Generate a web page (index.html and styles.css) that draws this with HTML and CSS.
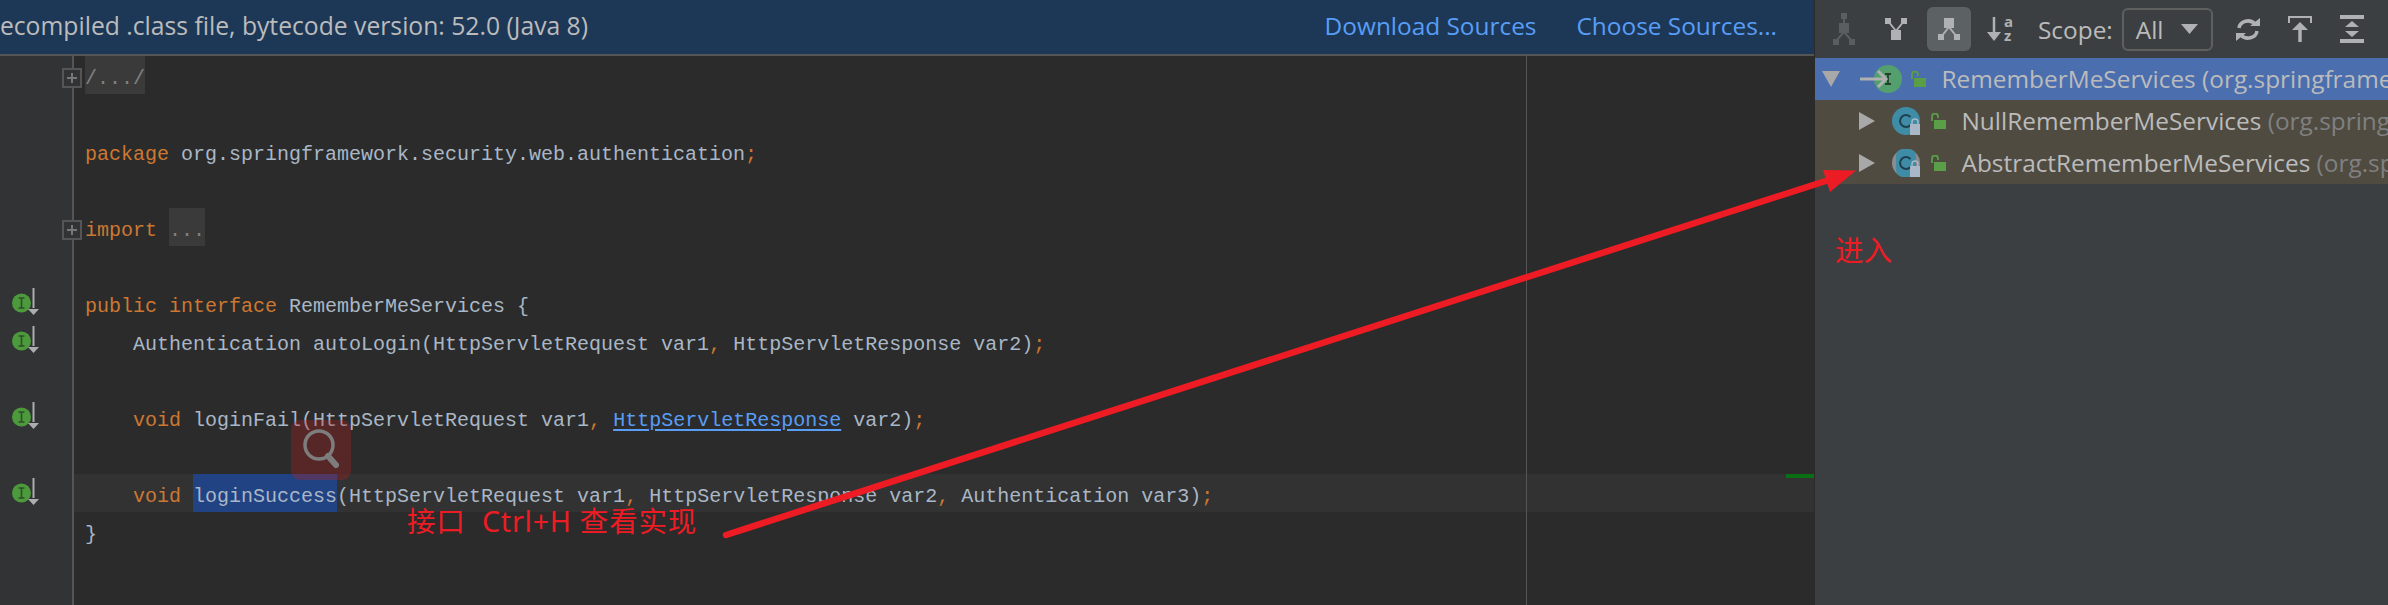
FILE: index.html
```html
<!DOCTYPE html>
<html lang="zh">
<head>
<meta charset="utf-8">
<title>RememberMeServices</title>
<link rel="stylesheet" href="styles.css">
</head>
<body>
<svg width="0" height="0" class="defs">
  <defs>
    <g id="impl">
      <circle cx="9.5" cy="15" r="9.5" fill="#4d9a3c"/>
      <path d="M6.5 10h6M6.5 20h6M9.5 10v10" stroke="#2f4f2a" stroke-width="1.6" fill="none"/>
      <path d="M21.5 0v20" stroke="#adadad" stroke-width="2" fill="none"/>
      <path d="M16 21h11l-5.500 6z" fill="#adadad"/>
    </g>
    <g id="lockg">
      <path d="M2 8V3.500a3 3 0 0 1 6 0V5" stroke="#5a9e48" stroke-width="1.800" fill="none"/>
      <rect x="4" y="7" width="12" height="9" fill="#5a9e48"/>
    </g>
    <g id="tri"><path d="M0 0l16 9-16 9z" fill="#a8a8a8"/></g>
  </defs>
</svg>
<div class="app">
  <main class="editor">
    <header class="banner">
      <span class="banner-text">Decompiled .class file, bytecode version: 52.0 (Java 8)</span>
      <a class="banner-link first">Download Sources</a>
      <a class="banner-link">Choose Sources...</a>
    </header>
    <div class="body">
      <div class="gutter">
        <div class="gline"><span class="foldbox"></span></div>
        <div class="gline"></div>
        <div class="gline"></div>
        <div class="gline"></div>
        <div class="gline"><span class="foldbox"></span></div>
        <div class="gline"></div>
        <div class="gline"><svg class="impl" width="28" height="28"><use href="#impl"/></svg></div>
        <div class="gline"><svg class="impl" width="28" height="28"><use href="#impl"/></svg></div>
        <div class="gline"></div>
        <div class="gline"><svg class="impl" width="28" height="28"><use href="#impl"/></svg></div>
        <div class="gline"></div>
        <div class="gline"><svg class="impl" width="28" height="28"><use href="#impl"/></svg></div>
      </div>
      <div class="code">
        <div class="line"><span class="fold">/.../</span></div>
        <div class="line"></div>
        <div class="line"><span class="kw">package</span> org.springframework.security.web.authentication<span class="kw">;</span></div>
        <div class="line"></div>
        <div class="line"><span class="kw">import</span> <span class="fold">...</span></div>
        <div class="line"></div>
        <div class="line"><span class="kw">public interface</span> RememberMeServices {</div>
        <div class="line">    Authentication autoLogin(HttpServletRequest var1<span class="kw">,</span> HttpServletResponse var2)<span class="kw">;</span></div>
        <div class="line"></div>
        <div class="line">    <span class="kw">void</span> loginFail(HttpServletRequest var1<span class="kw">,</span> <a class="link">HttpServletResponse</a> var2)<span class="kw">;</span></div>
        <div class="line"></div>
        <div class="line current">    <span class="kw">void</span> <span class="sel">loginSuccess</span>(HttpServletRequest var1<span class="kw">,</span> HttpServletResponse var2<span class="kw">,</span> Authentication var3)<span class="kw">;</span></div>
        <div class="line">}</div>
        <span class="guide"></span>
        <span class="marker"></span>
      </div>
    </div>
  </main>
  <aside class="panel">
    <div class="toolbar">
      <svg class="tool t1" width="22" height="32" viewBox="0 0 22 32"><g fill="#5b5e60"><rect x="8" y="0" width="6" height="6"/><rect x="6" y="10" width="10" height="10"/><rect x="0" y="26" width="6" height="6"/><rect x="16" y="26" width="6" height="6"/></g><path d="M11 5v6M11 19L3 28M11 19l8 9" stroke="#5b5e60" stroke-width="2" fill="none"/></svg>
      <svg class="tool t2" width="22" height="22" viewBox="0 0 22 22"><g fill="#afb1b3"><rect x="0" y="0" width="6" height="6"/><rect x="16" y="0" width="6" height="6"/><rect x="6" y="12" width="10" height="10"/></g><path d="M3 3l8 10M19 3l-8 10" stroke="#afb1b3" stroke-width="2" fill="none"/></svg>
      <span class="toggle"><svg width="22" height="22" viewBox="0 0 22 22"><g fill="#afb1b3"><rect x="6" y="0" width="10" height="10"/><rect x="0" y="16" width="6" height="6"/><rect x="16" y="16" width="6" height="6"/></g><path d="M11 9L3 19M11 9l8 10" stroke="#afb1b3" stroke-width="2" fill="none"/></svg></span>
      <svg class="tool t4" width="27" height="25" viewBox="0 0 27 25"><path d="M7 0v20" stroke="#afb1b3" stroke-width="2.500"/><path d="M0 15h14l-7 9z" fill="#afb1b3"/><text x="17" y="10" class="az">a</text><text x="17" y="24" class="az">z</text></svg>
      <span class="scope">Scope:</span>
      <span class="combo"><span class="combo-val">All</span><svg class="combo-arrow" width="17" height="10" viewBox="0 0 17 10"><path d="M0 0h17l-8.500 10z" fill="#afb1b3"/></svg></span>
      <svg class="tool t5" width="24" height="23" viewBox="0 0 24 23"><path d="M3 10a9 8 0 0 1 16-4M21 13a9 8 0 0 1-16 4" stroke="#afb1b3" stroke-width="3.500" fill="none"/><path d="M14 8h10V0zM10 15H0v8z" fill="#afb1b3"/></svg>
      <svg class="tool t6" width="24" height="26" viewBox="0 0 24 26"><path d="M1 7V1h22v6" stroke="#afb1b3" stroke-width="2" fill="none"/><path d="M4 14L12 6l8 8z" fill="#afb1b3"/><path d="M12 12v14" stroke="#afb1b3" stroke-width="3.500"/></svg>
      <svg class="tool t7" width="24" height="28" viewBox="0 0 24 28"><g fill="#afb1b3"><rect width="24" height="4"/><rect y="24" width="24" height="4"/><path d="M12 6l7 6H5zM12 22l7-6H5z"/></g></svg>
    </div>
    <div class="row selected">
      <svg class="exp" width="18" height="16" viewBox="0 0 18 16"><path d="M0 0h18l-9 16z" fill="#a8a8a8"/></svg>
      <svg class="rooticon" width="42" height="28" viewBox="0 0 42 28"><circle cx="28" cy="14" r="14" fill="#549f6e"/><path d="M25 9h6M25 19h6M28 9v10" stroke="#26402f" stroke-width="1.800" fill="none"/><path d="M0 14h26M18 6l8 8-8 8" stroke="#b0b0b0" stroke-width="3" fill="none"/></svg>
      <svg class="lock" width="17" height="17"><use href="#lockg"/></svg>
      <span class="name rootname">RememberMeServices (org.springframework.security.web.authentication)</span>
    </div>
    <div class="row child">
      <svg class="arrow" width="16" height="18"><use href="#tri"/></svg>
      <svg class="cicon" width="32" height="30" viewBox="0 0 32 30"><circle cx="14" cy="14" r="14" fill="#3f8ca6"/><path d="M18.500 10a6 6 0 1 0 0 8" stroke="#1f3f50" stroke-width="2" fill="none"/><path d="M20 17v-2a3 3 0 0 1 6 0v2" stroke="#a9b7c6" stroke-width="1.500" fill="none"/><rect x="18" y="17" width="10" height="11" fill="#a9b7c6"/></svg>
      <svg class="lock" width="17" height="17"><use href="#lockg"/></svg>
      <span class="name">NullRememberMeServices <span class="pkg">(org.springframework.security.web.authentication)</span></span>
    </div>
    <div class="row child">
      <svg class="arrow" width="16" height="18"><use href="#tri"/></svg>
      <svg class="cicon" width="32" height="30" viewBox="0 0 32 30"><circle cx="14" cy="14" r="14" fill="#8a8d8f"/><rect x="4" y="0" width="20" height="28" rx="7" fill="#3f8ca6"/><path d="M18.500 10a6 6 0 1 0 0 8" stroke="#1f3f50" stroke-width="2" fill="none"/><path d="M20 17v-2a3 3 0 0 1 6 0v2" stroke="#a9b7c6" stroke-width="1.500" fill="none"/><rect x="18" y="17" width="10" height="11" fill="#a9b7c6"/></svg>
      <svg class="lock" width="17" height="17"><use href="#lockg"/></svg>
      <span class="name">AbstractRememberMeServices <span class="pkg">(org.springframework.security.web.authentication)</span></span>
    </div>
  </aside>
</div>
<div class="lens"><svg width="40" height="44" viewBox="0 0 40 44"><circle cx="18" cy="17" r="14" stroke="#7d7d7d" stroke-width="3.500" fill="none"/><path d="M27 28l8 9" stroke="#7d7d7d" stroke-width="6" stroke-linecap="round" fill="none"/></svg></div>
<svg class="annot" width="2388" height="605" viewBox="0 0 2388 605">
  <path d="M726 535L1838 177" stroke="#ed1c24" stroke-width="6.500" stroke-linecap="round"/>
  <path d="M1856 170.500L1823 170l7 22z" fill="#ed1c24"/>
</svg>
<span class="note note1">接口&nbsp;&nbsp;Ctrl+H 查看实现</span>
<span class="note note2">进入</span>
</body>
</html>
```
FILE: styles.css
```css
html, body { margin: 0; padding: 0; width: 2388px; height: 605px; overflow: hidden; background: #2b2b2b; }
.defs { position: absolute; }
.app { display: flex; width: 2388px; height: 605px; }

.editor { width: 1814px; flex: none; display: flex; flex-direction: column; overflow: hidden; }
.banner { height: 50px; padding-bottom: 4px; flex: none; display: flex; align-items: center; background: #1d3857; border-bottom: 2px solid #555; font-family: "Open Sans", sans-serif; font-size: 24.4px; color: #bbb; white-space: nowrap; }
.banner-text { margin-left: -18px; font-size: 24.7px; }
.banner-link { color: #589df6; margin-left: 40px; }
.banner-link.first { margin-left: auto; }
.banner-link:last-child { margin-right: 37px; }

.body { flex: 1; display: flex; min-height: 0; }
.gutter { width: 72px; flex: none; background: #313335; border-right: 2px solid #555; position: relative; z-index: 1; }
.gline { height: 38px; position: relative; display: flex; align-items: center; }
.foldbox { flex: none; margin-left: 62px; margin-top: 5px; width: 16px; height: 16px; border: 2px solid #555; background: #313335 linear-gradient(#777,#777) center/10px 2px no-repeat; position: relative; z-index: 1; }
.foldbox::after { content: ""; position: absolute; left: 7px; top: 3px; width: 2px; height: 10px; background: #777; }
.impl { margin-left: 12px; margin-top: -2px; }

.code { flex: 1; position: relative; padding: 0; font-family: "Liberation Mono", monospace; font-size: 20px; color: #a9b7c6; }
.line { height: 38px; line-height: 46px; padding-left: 11px; white-space: pre; }
.line.current { background: #323232; }
.kw { color: #cc7832; }
.fold { display: inline-block; height: 38px; vertical-align: top; color: #808080; background: #3a3a3a; }
.link { color: #589df6; text-decoration: underline; text-decoration-thickness: 2px; text-underline-offset: 3px; }
.sel { display: inline-block; height: 38px; vertical-align: top; background: #214283; }
.guide { position: absolute; left: 1452px; top: 0; bottom: 0; width: 1px; background: #555; }
.marker { position: absolute; right: 0; top: 418px; width: 28px; height: 4px; background: #0a6e14; }

.panel { flex: 1; min-width: 0; background: #3c3f41; border-left: 1px solid #2b2b2b; overflow: hidden; font-family: "Open Sans", sans-serif; font-size: 24.4px; color: #bbb; }
.toolbar { height: 58px; display: flex; align-items: center; position: relative; }
.tool { flex: none; }
.t1 { margin-left: 18px; }
.t2 { margin-left: 30px; }
.toggle { flex: none; margin-left: 20px; width: 44px; height: 44px; border-radius: 6px; background: #5c6164; display: flex; align-items: center; justify-content: center; }
.t4 { margin-left: 16px; }
.az { font: bold 15px "Open Sans", sans-serif; fill: #afb1b3; }
.scope { margin-left: 24px; }
.combo { flex: none; margin-left: 9px; width: 91px; height: 43px; box-sizing: border-box; border: 2px solid #5e6060; border-radius: 6px; display: flex; align-items: center; padding-left: 12px; }
.combo-arrow { margin-left: auto; margin-right: 13px; }
.t5 { margin-left: 23px; }
.t6 { margin-left: 28px; }
.t7 { margin-left: 28px; }

.row { height: 42px; display: flex; align-items: center; white-space: nowrap; }
.row.selected { background: #4b6eaf; padding-left: 7px; }
.row.child { background: #4f4b41; padding-left: 44px; }
.exp, .rooticon, .arrow, .cicon, .lock { flex: none; }
.rooticon { margin-left: 20px; }
.lock { margin-left: 8px; }
.name { flex: none; margin-top: -1px; }
.rootname { margin-left: 14.500px; }
.row.child .name { margin-left: 14.500px; }
.cicon { margin-left: 17px; margin-top: 2px; }
.row.child .lock { margin-left: 6px; }
.pkg { color: #808080; }

.lens { position: absolute; left: 291px; top: 420px; width: 60px; height: 60px; border-radius: 9px; background: rgba(190, 30, 30, .3); display: flex; align-items: center; justify-content: center; }
.annot { position: absolute; left: 0; top: 0; pointer-events: none; }
.note { position: absolute; color: #ed1c24; font-family: "Noto Sans", "Noto Sans CJK SC", sans-serif; font-size: 28.5px; line-height: 34px; letter-spacing: .8px; white-space: nowrap; }
.note1 { left: 407px; top: 504px; }
.note2 { left: 1835px; top: 233px; letter-spacing: 0; }
```
